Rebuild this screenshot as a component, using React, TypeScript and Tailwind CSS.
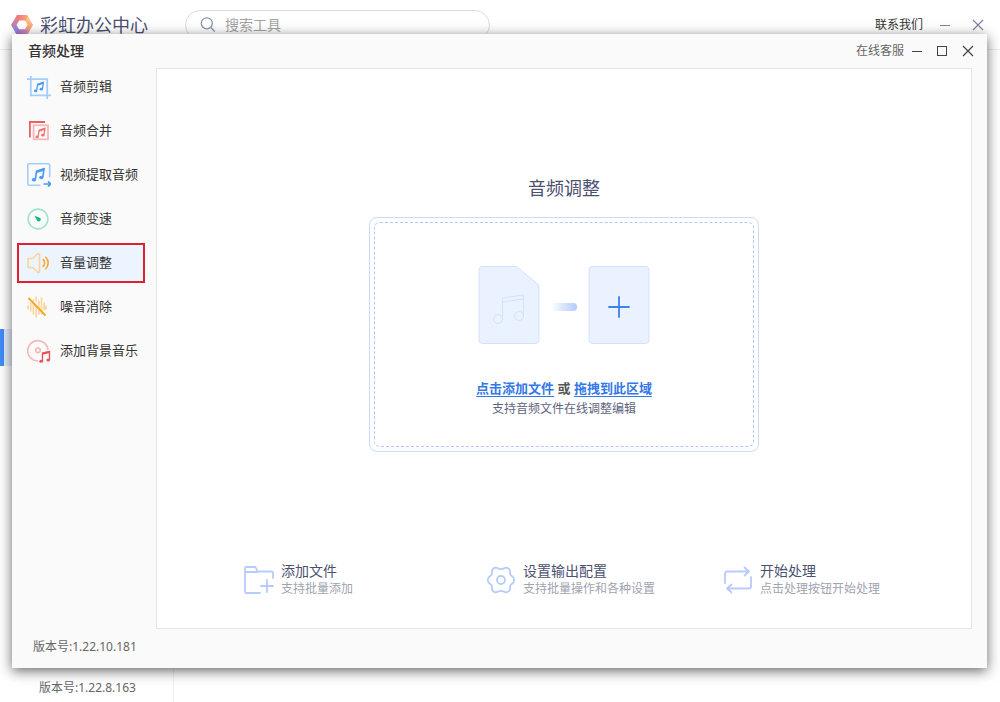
import type { ReactNode } from "react"

type IconProps = { className?: string }

const svgProps = {
  width: 24,
  height: 24,
  viewBox: "0 0 24 24",
  fill: "none",
  strokeWidth: 1.6,
  "aria-hidden": true,
}

function Notes({ color }: { color: string }) {
  return (
    <g stroke={color} fill={color}>
      <path d="M9.6 15.6l1-6.200 5.800-1.900-1 6.400" fill="none" strokeWidth="1.3" />
      <path d="M10.300 8.800l6.600-2.200-.3 2.200-6.500 2.100z" stroke="none" />
      <ellipse cx="8.600" cy="15.900" rx="1.700" ry="1.400" stroke="none" />
      <ellipse cx="14.300" cy="14.200" rx="1.700" ry="1.400" stroke="none" />
    </g>
  )
}

function TrimIcon() {
  return (
    <svg {...svgProps} stroke="#a3cdfb">
      <path d="M0 4.2h20.2V24M3.8 1v19.3H24" strokeWidth="1.8" />
      <Notes color="#4b9bf5" />
    </svg>
  )
}

function MergeIcon() {
  return (
    <svg {...svgProps}>
      <path d="M2.9 18.5V3H18" stroke="#ee5f5f" strokeWidth="1.8" />
      <rect x="6.600" y="6.300" width="14.400" height="14" stroke="#f8b7b7" strokeWidth="1.8" />
      <g transform="translate(1.500 2)">
        <Notes color="#f07474" />
      </g>
    </svg>
  )
}

function ExtractIcon() {
  return (
    <svg {...svgProps}>
      <path d="M13.5 22.2H2a1.2 1.2 0 0 1-1.200-1.200V2A1.200 1.200 0 0 1 2 .8h19.500A1.200 1.200 0 0 1 22.700 2v12.500" stroke="#a3cdfb" />
      <g transform="translate(-4 -3.600) scale(1.280)">
        <Notes color="#4b9bf5" />
      </g>
      <path d="M16.500 21h7M21 18.300l2.800 2.700-2.800 2.700" stroke="#4b9bf5" />
    </svg>
  )
}

function SpeedIcon() {
  return (
    <svg {...svgProps}>
      <circle cx="11" cy="12" r="9.900" stroke="#a3e4cb" />
      <path d="M7.400 8.800l5.800 2.200a2 2 0 1 1-2.800 2.900z" fill="#12b886" />
    </svg>
  )
}

function VolumeIcon() {
  return (
    <svg {...svgProps} strokeLinejoin="round" strokeLinecap="round">
      <path d="M1 7.500h4.500l5-4.500q2-1.200 2 1v16q0 2.200-2 1l-5-4.500H1z" stroke="#fbd49c" />
      <path d="M16.200 8.600a5 5 0 0 1 0 6.800M18.800 6.200a8.300 8.300 0 0 1 0 11.600" stroke="#f9a62b" />
    </svg>
  )
}

function DenoiseIcon() {
  return (
    <svg {...svgProps} strokeLinecap="round">
      <path
        d="M1 11v3M3.700 8v8M6.400 5v14M9.100 11v11M9.100 2v4M11.800 6v13M14.500 3v16M17.200 8v7M19 11v3"
        stroke="#fbd49c"
      />
      <path d="M2 3.500l16 16.500" stroke="#f9a62b" strokeWidth="1.8" />
    </svg>
  )
}

function MusicDiscIcon() {
  return (
    <svg {...svgProps}>
      <path d="M11 22A10.200 10.200 0 1 1 21 11" stroke="#f8b7b7" />
      <circle cx="11" cy="11.300" r="2.300" stroke="#f8b7b7" />
      <path d="M15.500 22.500v-8.200l7-1.600v8.200" stroke="#e95459" strokeWidth="1.4" />
      <path d="M15 13.500l8-1.800v2.200l-8 1.800z" fill="#e95459" />
      <ellipse cx="14.200" cy="22.300" rx="1.900" ry="1.500" fill="#e95459" />
      <ellipse cx="21.200" cy="20.900" rx="1.900" ry="1.500" fill="#e95459" />
    </svg>
  )
}

function Logo({ className }: IconProps) {
  return (
    <svg className={className} width="24" height="22" viewBox="0 0 24 24" aria-hidden="true">
      <defs>
        <linearGradient id="logoTop" x1="0" x2="1">
          <stop offset="0" stopColor="#ef6a78" />
          <stop offset="1" stopColor="#fbb07a" />
        </linearGradient>
        <linearGradient id="logoRight" x1="0" x2="0" y1="0" y2="1">
          <stop offset="0" stopColor="#fdd089" />
          <stop offset="1" stopColor="#f58f74" />
        </linearGradient>
        <linearGradient id="logoLeft" x1="0" x2="0" y1="0" y2="1">
          <stop offset="0" stopColor="#f57f73" />
          <stop offset="1" stopColor="#7f86f4" />
        </linearGradient>
        <linearGradient id="logoBottom" x1="0" x2="1">
          <stop offset="0" stopColor="#8c6fe6" />
          <stop offset="1" stopColor="#f28eae" />
        </linearGradient>
      </defs>
      <path d="M6.500 1h11l2.500 4-3.500 3.500L15 7H9L5 4z" fill="url(#logoTop)" />
      <path d="M18.500 3L24 12l-5 8.500-4-4L18 12l-2.500-5z" fill="url(#logoRight)" />
      <path d="M5.500 3L0 12l5 8.500L9 17l-3-5 3-5z" fill="url(#logoLeft)" />
      <path d="M4.500 19.500L6.500 23h11l3-5-5-1.500H9z" fill="url(#logoBottom)" />
    </svg>
  )
}

function SearchIcon() {
  return (
    <svg width="16" height="16" viewBox="0 0 16 16" fill="none" stroke="#8a93b2" strokeWidth="1.3" aria-hidden="true">
      <circle cx="6.800" cy="6.300" r="5.500" />
      <path d="M10.800 10.500l4 4" />
    </svg>
  )
}

function MinimizeIcon() {
  return (
    <svg width="12" height="12" viewBox="0 0 12 12" stroke="currentColor" aria-hidden="true">
      <path d="M1 6.500h10" />
    </svg>
  )
}

function MaximizeIcon() {
  return (
    <svg width="12" height="12" viewBox="0 0 12 12" fill="none" stroke="currentColor" aria-hidden="true">
      <rect x="1.500" y="1.500" width="9" height="9" />
    </svg>
  )
}

function CloseIcon() {
  return (
    <svg width="12" height="12" viewBox="0 0 12 12" stroke="currentColor" strokeWidth="1.2" aria-hidden="true">
      <path d="M1 1l10 10M11 1L1 11" />
    </svg>
  )
}

const stepSvg = {
  width: 30,
  height: 30,
  viewBox: "0 0 30 30",
  fill: "none",
  stroke: "#b7ccfc",
  strokeWidth: 1.8,
  strokeLinecap: "round" as const,
  strokeLinejoin: "round" as const,
  "aria-hidden": true,
}

function FolderPlusIcon() {
  return (
    <svg {...stepSvg}>
      <path d="M16 28H2.500A1.500 1.500 0 0 1 1 26.500V3.500A1.500 1.500 0 0 1 2.500 2h9l2 4.500h14A1.500 1.500 0 0 1 29 8V13M1 7h12.500" />
      <path d="M23 15v12M17 21h12" />
    </svg>
  )
}

function GearIcon() {
  return (
    <svg {...stepSvg}>
      <path d="M9.500 2.700c1.600-.4 3.200 1.500 5.500 1.500s3.900-1.900 5.500-1.500c1.500.4 3.300 1.600 3.600 3.100.3 1.600-.5 2.600.3 4 .9 1.500 3.900 1.800 3.900 5.200s-3 3.700-3.900 5.200c-.8 1.400 0 2.400-.3 4-.3 1.500-2.100 2.700-3.600 3.100-1.600.4-3.200-1.500-5.500-1.500s-3.900 1.900-5.500 1.500c-1.500-.4-3.300-1.600-3.600-3.100-.3-1.600.5-2.600-.3-4C4.700 18.700 1.700 18.400 1.700 15s3-3.700 3.900-5.200c.8-1.400 0-2.400.3-4 .3-1.500 2.100-2.700 3.600-3.100z" />
      <circle cx="15" cy="15" r="4" />
    </svg>
  )
}

function LoopIcon() {
  return (
    <svg {...stepSvg}>
      <path d="M2 18V8.500A2 2 0 0 1 4 6.500h22M21.500 2.500l4.500 4-4.500 4" />
      <path d="M28 12v9.500a2 2 0 0 1-2 2H4M8.500 19.500l-4.500 4 4.500 4" />
    </svg>
  )
}

const menu: { label: string; icon: ReactNode; active?: boolean }[] = [
  { label: "音频剪辑", icon: <TrimIcon /> },
  { label: "音频合并", icon: <MergeIcon /> },
  { label: "视频提取音频", icon: <ExtractIcon /> },
  { label: "音频变速", icon: <SpeedIcon /> },
  { label: "音量调整", icon: <VolumeIcon />, active: true },
  { label: "噪音消除", icon: <DenoiseIcon /> },
  { label: "添加背景音乐", icon: <MusicDiscIcon /> },
]

const steps = [
  { title: "添加文件", desc: "支持批量添加", icon: <FolderPlusIcon /> },
  { title: "设置输出配置", desc: "支持批量操作和各种设置", icon: <GearIcon /> },
  { title: "开始处理", desc: "点击处理按钮开始处理", icon: <LoopIcon /> },
]

// Main window of the app, mostly hidden behind the audio tool
function Launcher() {
  return (
    <div className="flex min-h-screen flex-col">
      <header className="flex h-[50px] items-center border-b border-[#ececec] pr-4 pl-[10px]">
        <Logo />
        <h1 className="ml-[6px] w-[145px] text-lg leading-6 text-[#4b5170]">彩虹办公中心</h1>
        <label className="flex h-[30px] w-[305px] items-center gap-[9px] rounded-full border border-[#dcdcdc] pl-[14px]">
          <SearchIcon />
          <input
            type="text"
            aria-label="搜索工具"
            placeholder="搜索工具"
            className="min-w-0 flex-1 bg-transparent text-sm outline-none placeholder:text-[#a3a3a3]"
          />
        </label>
        <div className="ml-auto flex items-center text-[#7d829c]">
          <a href="#" className="mr-4 text-xs text-[#333]">联系我们</a>
          <button type="button" aria-label="最小化" className="mr-[21px]"><MinimizeIcon /></button>
          <button type="button" aria-label="关闭"><CloseIcon /></button>
        </div>
      </header>
      <div className="flex flex-1">
        <aside className="flex w-[174px] flex-col border-r border-[#efefef]">
          <div className="mt-[279px] h-[37px] border-l-4 border-[#3f8cf7] bg-[#e3edfb]" />
          <p className="mt-auto mb-1 pl-[39px] text-xs leading-5 text-[#666]">版本号:1.22.8.163</p>
        </aside>
      </div>
    </div>
  )
}

function Sidebar() {
  return (
    <aside className="flex w-36 shrink-0 flex-col pl-[5px]">
      <nav className="flex flex-col gap-1">
        {menu.map((item) => (
          <button
            key={item.label}
            type="button"
            className={
              item.active
                ? "flex h-10 w-32 items-center gap-[9px] border-2 border-[#e0202c] bg-[#ecf4ff] pl-2 text-[13px] whitespace-nowrap text-[#333]"
                : "flex h-10 w-32 items-center gap-[9px] border-2 border-transparent pl-2 text-[13px] whitespace-nowrap text-[#333]"
            }
          >
            <span className="shrink-0">{item.icon}</span>
            {item.label}
          </button>
        ))}
      </nav>
      <p className="mt-auto mb-[11px] pl-4 text-xs leading-5 text-[#666]">版本号:1.22.10.181</p>
    </aside>
  )
}

function DropZone() {
  return (
    <div className="w-[390px] rounded-lg border border-[#c9dbfd] p-1">
      <div className="flex flex-col items-center rounded-md border border-dashed border-[#b3c6fb] pt-[43px] pb-[26px]">
        <div className="flex items-center">
          <svg width="62" height="78" viewBox="0 0 62 78" fill="none" stroke="#d4e1fd" aria-hidden="true">
            <path d="M4.500.5H38.500L61 19v55a3.500 3.500 0 0 1-3.500 3.500h-53A3.500 3.500 0 0 1 1 74V4A3.500 3.500 0 0 1 4.500.5z" fill="#eaf1ff" />
            <path d="M24.500 53V32l21-3v21.500M24.500 36l21-3" />
            <circle cx="20" cy="53" r="4.500" />
            <circle cx="41" cy="50" r="4.500" />
          </svg>
          <div className="mx-[11px] mt-1 h-2 w-[26px] rounded-full bg-linear-to-r from-white to-[#b1c9fc]" />
          <svg width="62" height="78" viewBox="0 0 62 78" fill="none" aria-hidden="true">
            <rect x="1" y=".5" width="60" height="77" rx="3.500" fill="#eaf1ff" stroke="#d4e1fd" />
            <path d="M31 31v20M21 41h20" stroke="#3f7ff2" strokeWidth="1.800" strokeLinecap="round" />
          </svg>
        </div>
        <p className="mt-[34px] text-[13px] leading-5 font-bold text-[#555]">
          <a href="#" className="text-[#3478e8] underline underline-offset-3">点击添加文件</a> 或{" "}
          <a href="#" className="text-[#3478e8] underline underline-offset-3">拖拽到此区域</a>
        </p>
        <p className="text-xs leading-[22px] text-[#5e6380]">支持音频文件在线调整编辑</p>
      </div>
    </div>
  )
}

function AudioWindow() {
  return (
    <section className="absolute top-[34px] right-[13px] bottom-[34px] left-3 flex flex-col bg-[#fafafa] shadow-[0_3px_12px_rgba(0,0,0,0.6)]">
      <header className="flex h-[33px] shrink-0 items-center pr-[13px] pl-4">
        <h2 className="text-sm font-medium text-[#333]">音频处理</h2>
        <div className="ml-auto flex items-center text-[#444]">
          <a href="#" className="mr-[7px] text-xs text-[#666]">在线客服</a>
          <button type="button" aria-label="最小化" className="mr-[13px]"><MinimizeIcon /></button>
          <button type="button" aria-label="最大化" className="mr-[14px]"><MaximizeIcon /></button>
          <button type="button" aria-label="关闭"><CloseIcon /></button>
        </div>
      </header>
      <div className="flex flex-1">
        <Sidebar />
        <main className="mt-px mr-[15px] mb-[39px] flex flex-1 flex-col items-center border border-[#e6e6e6] bg-white pt-[105px] pb-[30px]">
          <h3 className="mb-[15px] text-lg leading-7 text-[#4b5170]">音频调整</h3>
          <DropZone />
          <ul className="mt-auto grid grid-cols-[242px_237px_auto] pr-1">
            {steps.map((step) => (
              <li key={step.title} className="flex items-center gap-[7px]">
                {step.icon}
                <div>
                  <p className="text-sm leading-[18px] text-[#4b5170]">{step.title}</p>
                  <p className="text-xs leading-[18px] text-[#a0a3b0]">{step.desc}</p>
                </div>
              </li>
            ))}
          </ul>
        </main>
      </div>
    </section>
  )
}

export default function App() {
  return (
    <div className="relative min-h-screen bg-white font-['Noto_Sans','Noto_Sans_CJK_SC',sans-serif]">
      <Launcher />
      <AudioWindow />
    </div>
  )
}
